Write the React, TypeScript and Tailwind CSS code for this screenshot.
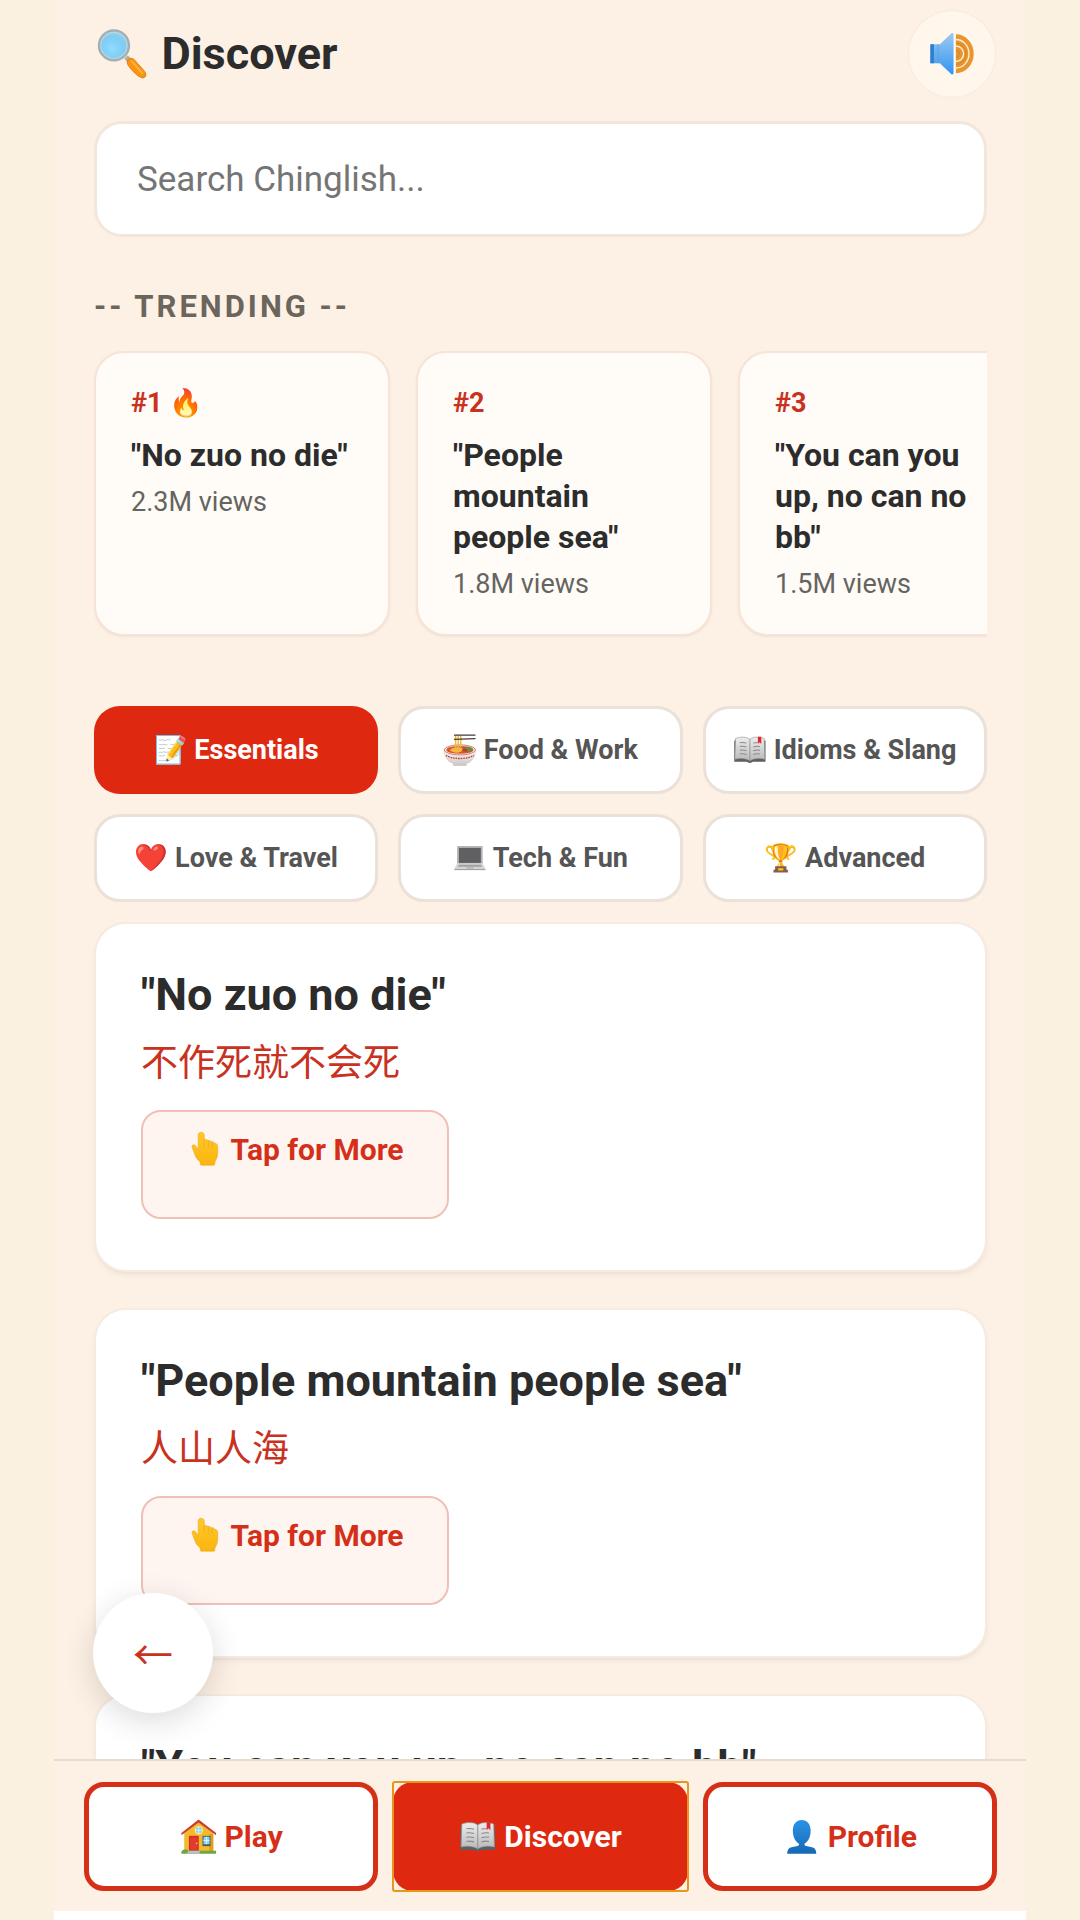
import type { ReactNode } from 'react';

function Icon({ children }: { children: ReactNode }) {
  return (
    <svg viewBox="0 0 40 40" aria-hidden="true" className="inline-block size-[1.25em] align-[-0.28em]">
      {children}
    </svg>
  );
}

function SearchIcon() {
  return (
    <Icon>
      <defs>
        <radialGradient id="lens" cx="0.45" cy="0.6" r="0.65">
          <stop offset="0" stopColor="#8fdcff" />
          <stop offset="0.6" stopColor="#7ecbf5" />
          <stop offset="1" stopColor="#a5d3ea" />
        </radialGradient>
      </defs>
      <path d="M21.5 24l2.5-2.5 3 3-2.5 2.5z" fill="#a9b3a6" />
      <path d="M24 25c1.5-2 3.5-1.5 5 0l7 8c1.8 2.5.5 5-2 4.5-3-.8-7-5-9.500-8.500-.9-1.300-1.100-3-.5-4z" fill="#fb9410" stroke="#d9780a" strokeWidth="0.6" />
      <path d="M27 26l7.500 8.500" stroke="#ffb545" strokeWidth="1.2" strokeLinecap="round" />
      <circle cx="14.2" cy="14.5" r="10.6" fill="url(#lens)" stroke="#a3afb2" strokeWidth="1.8" />
      <circle cx="14.2" cy="14.5" r="9.3" fill="none" stroke="#bcd6dd" strokeWidth="0.8" />
    </Icon>
  );
}

function SpeakerIcon() {
  return (
    <Icon>
      <defs>
        <linearGradient id="horn" x1="0" y1="0" x2="0" y2="1">
          <stop offset="0" stopColor="#9fcaf0" />
          <stop offset="1" stopColor="#2f95f2" />
        </linearGradient>
      </defs>
      <path d="M2 12h8L19.500 3c1-.8 2-.4 2 1v32c0 1.500-1 1.800-2 1L10 28H2z" fill="url(#horn)" />
      <path d="M2 12h3v16H2z" fill="#2b7fd0" />
      <path d="M8.500 12v16" stroke="#5d9fd8" strokeWidth="0.7" />
      <path d="M23.500 3.500a15 16.500 0 0 1 0 33z" fill="#e8952f" />
      <g fill="none" stroke="#fff1d8" strokeWidth="1.1">
        <path d="M23.500 8a11 12 0 0 1 0 24" />
        <path d="M23.500 13.500a6.500 6.500 0 0 1 0 13" />
      </g>
      <g fill="none" stroke="#c97d24" strokeWidth="0.6">
        <path d="M23.500 11a8.500 9 0 0 1 0 18" />
        <path d="M23.500 17a3 3 0 0 1 0 6" />
      </g>
    </Icon>
  );
}

function NoodlesIcon() {
  return (
    <Icon>
      <defs>
        <linearGradient id="bowl" x1="0" y1="0" x2="0" y2="1">
          <stop offset="0" stopColor="#ffffff" />
          <stop offset="1" stopColor="#c9c5c2" />
        </linearGradient>
      </defs>
      <path d="M1.500 20c0 9 5 14.500 11 16v2.500h15V36c6-1.500 11-7 11-16z" fill="url(#bowl)" stroke="#b9b0aa" strokeWidth="0.5" />
      <ellipse cx="20" cy="20" rx="18.5" ry="6" fill="#f4ece8" stroke="#c4503a" strokeWidth="0.8" />
      <ellipse cx="20" cy="20" rx="16" ry="4.7" fill="#d9552b" />
      <path d="M8 20.500c2-3 6-4 12-3.500 3 .5 4 2.500 2 4.500-3 2.500-10 2.500-14-1z" fill="#f3b643" />
      <path d="M26 17.500c2.500-2 6-1.500 8 .5l1 2.500-5 1z" fill="#55963e" />
      <path d="M23 20c1.500-2 4-2 5.500 0s-4 3-5.500 0z" fill="#a8452e" />
      <path d="M3.500 26.500c8 5 25 5 33 0" fill="none" stroke="#c8402f" strokeWidth="1.6" strokeDasharray="2 1" />
      <path d="M15 3v15M18 2v16M21 3v14" stroke="#f2b632" strokeWidth="1.7" fill="none" />
      <path d="M13 2.500h25.500M13 7.500l25.500-.8" stroke="#4a3a35" strokeWidth="1.6" />
    </Icon>
  );
}

function BookIcon() {
  return (
    <Icon>
      <defs>
        <linearGradient id="page" x1="0" y1="0" x2="0" y2="1">
          <stop offset="0" stopColor="#ededed" />
          <stop offset="1" stopColor="#b9b9b9" />
        </linearGradient>
      </defs>
      <path d="M1.500 9v25h14.500c1.500 0 2 1.500 4 1.500s2.500-1.500 4-1.500h14.500V9z" fill="#5f5f63" />
      <path d="M3 6.500c7-2.500 13-2 17 1 4-3 10-3.500 17-1l.8 24.500c-7-1.500-13-1-17.800 2-4.800-3-10.800-3.500-17.800-2z" fill="url(#page)" stroke="#8d8d90" strokeWidth="0.7" />
      <path d="M20 7.500V33" stroke="#8e8e92" strokeWidth="1" />
      <g stroke="#8a8a8e" strokeWidth="1.2" fill="none">
        <path d="M8 11.500c3-.6 5-.4 8 .5M8 16c3-.6 5-.4 8 .5M8 20.500c3-.6 5-.4 8 .5M8 25c3-.6 5-.4 8 .5" />
        <path d="M24 12c2-.6 3-.8 5-.8M24 16.500c3-.9 5-1.100 8-.5M24 21c3-.9 5-1.100 8-.5M24 25.500c3-.9 5-1.100 8-.5" />
      </g>
      <path d="M29.500 4.500h4v8.500l-2-2-2 2z" fill="#e0262b" />
    </Icon>
  );
}

function LaptopIcon() {
  return (
    <Icon>
      <path d="M6 6h28c.8 0 1.200.5 1.200 1.200V27H4.800V7.200C4.800 6.500 5.200 6 6 6z" fill="#b5b5b7" />
      <path d="M7 8.200h26V26H7z" fill="#606062" />
      <path d="M4.800 27h30.400l3.300 6.500H1.500z" fill="#d4d4d6" />
      <path d="M7 28.200h26l1.300 2.300H5.700z" fill="#a0a0a3" />
      <path d="M1.500 33.300h37v1.200h-37z" fill="#9a9a9c" />
      <path d="M16 31.200h8l.6 1.700h-9.200z" fill="#b5b5b8" />
    </Icon>
  );
}

function HandIcon() {
  return (
    <Icon>
      <defs>
        <linearGradient id="skin" x1="0" y1="0" x2="0" y2="1">
          <stop offset="0" stopColor="#ffc928" />
          <stop offset="1" stopColor="#fbb40f" />
        </linearGradient>
      </defs>
      <path
        d="M16 2.500c-1.800 0-3 1.200-3 3V20.500l-2.800-3.700c-2-2-4.500-.6-3.600 1.900l3.200 8.500c.8 2.800 2.700 4.500 5 6.300l1 4h14.500l.8-4c1.800-3 2.700-5.500 2.700-9.500v-6.500c0-2-1.300-3.200-3.100-3.300-.6-1.300-1.800-2-3.600-1.700-.8-1.100-2-1.500-3.600-1.200-.8-.9-2.200-1.300-4-1V5.500c0-1.800-1.400-3-3.500-3z"
        fill="url(#skin)"
        stroke="#eaa51a"
        strokeWidth="0.6"
      />
      <path d="M19.500 10.500v6.500M23.800 11.800v6M27.600 13.300v5" stroke="#eba51f" strokeWidth="0.8" strokeLinecap="round" fill="none" />
    </Icon>
  );
}

function HouseIcon() {
  return (
    <Icon>
      <path d="M4.500 15.500L20 4l15.500 11.500V36h-31z" fill="#f7b92c" />
      <path d="M31 17h4.500v19H31z" fill="#e39d1c" />
      <path d="M19.800 1.500L38.500 16v2.500L19.800 4.800 1.500 18.500V16z" fill="#c93d2c" />
      <circle cx="20" cy="13" r="4" fill="#7fd0f2" stroke="#fff0b0" strokeWidth="1" />
      <path d="M20 9v8M16 13h8" stroke="#fff6d8" strokeWidth="0.9" />
      <path d="M9.500 19h10.500v17H9.500z" fill="#d42f24" />
      <path d="M11 21h7.500v13H11z" fill="#e23c30" />
      <circle cx="17.8" cy="27" r="0.9" fill="#f8c33c" />
      <path d="M24 19h8.500v11H24z" fill="#465a66" />
      <path d="M25 20h6.500v8H25z" fill="#83d5f5" />
      <path d="M28.200 20v8M25 24h6.500" stroke="#fff" strokeWidth="0.8" />
      <path d="M1.500 36c1-2.500 4-3.500 7-2v1h30V38h-37z" fill="#6da643" />
      <path d="M9 35h12v3H7z" fill="#b7c3c9" />
    </Icon>
  );
}

function PersonIcon() {
  return (
    <Icon>
      <defs>
        <linearGradient id="bust" x1="0" y1="0" x2="0" y2="1">
          <stop offset="0" stopColor="#2b93e6" />
          <stop offset="1" stopColor="#1768b5" />
        </linearGradient>
      </defs>
      <path
        d="M20 2c-6 0-9.500 4.500-9.500 11.500 0 6.500 2.700 11.500 6.300 13.800.7 1.200.2 2.200-1.300 2.600l-6.500 1.300C5.800 32 4.500 34.500 4.500 38h31c0-3.500-1.300-6-4.500-6.800l-6.500-1.300c-1.500-.4-2-1.400-1.300-2.600 3.600-2.300 6.300-7.300 6.300-13.800C29.500 6.500 26 2 20 2z"
        fill="url(#bust)"
      />
    </Icon>
  );
}

const trending = [
  { rank: '#1 🔥', title: '"No zuo no die"', views: '2.3M views' },
  { rank: '#2', title: '"People mountain people sea"', views: '1.8M views' },
  { rank: '#3', title: '"You can you up, no can no bb"', views: '1.5M views' },
];

const categories = [
  { icon: '📝', label: 'Essentials', active: true },
  { icon: <NoodlesIcon />, label: 'Food & Work', active: false },
  { icon: <BookIcon />, label: 'Idioms & Slang', active: false },
  { icon: '❤️', label: 'Love & Travel', active: false },
  { icon: <LaptopIcon />, label: 'Tech & Fun', active: false },
  { icon: '🏆', label: 'Advanced', active: false },
];

const phrases = [
  { title: '"No zuo no die"', chinese: '不作死就不会死' },
  { title: '"People mountain people sea"', chinese: '人山人海' },
  { title: '"You can you up, no can no bb"', chinese: '你行你上啊' },
];

const tabs = [
  { icon: <HouseIcon />, label: 'Play', active: false },
  { icon: <BookIcon />, label: 'Discover', active: true },
  { icon: <PersonIcon />, label: 'Profile', active: false },
];

export default function App() {
  return (
    <div className="h-screen overflow-hidden bg-[#fbf1e1] font-['Roboto','Noto_Sans_CJK_SC',sans-serif] text-[#2c2c2c]">
      <div className="relative mx-auto flex h-full w-9/10 flex-col bg-[#fdf0e4]">
        <main className="min-h-0 flex-1 overflow-y-auto pt-6 pr-[39px] pl-10 [scrollbar-width:none]">
          <h1 className="text-[45px] leading-[60px] font-bold">
            <SearchIcon /> Discover
          </h1>

          <input
            type="search"
            aria-label="Search Chinglish"
            placeholder="Search Chinglish..."
            className="mt-[37px] h-[116px] w-full rounded-[28px] border-[3px] border-[#f3e7dc] bg-white px-10 text-[35px] placeholder:text-[#757575]"
          />

          <h2 className="mt-[48px] text-[31px] leading-[44px] font-bold tracking-[3px] text-[#6b665c]">-- TRENDING --</h2>
          <div className="mt-[22px] flex gap-[26px] overflow-x-auto pb-3 [scrollbar-width:none]">
            {trending.map((item) => (
              <article
                key={item.title}
                className="w-[296px] shrink-0 rounded-[30px] border-2 border-[#f8e3d8] bg-[#fffcf7] px-[35px] pt-[32px] pb-[32px] shadow-sm shadow-black/5"
              >
                <div className="text-[27px] leading-[36px] font-bold text-[#c8321f]">{item.rank}</div>
                <h3 className="mt-[14px] text-[32px] leading-[41px] font-bold">{item.title}</h3>
                <div className="mt-2 text-[27px] leading-[36px] text-[#666460]">{item.views}</div>
              </article>
            ))}
          </div>

          {/* Category filter */}
          <div className="mt-[58px] grid grid-cols-3 gap-5">
            {categories.map((cat) => (
              <button
                key={cat.label}
                className={
                  cat.active
                    ? 'h-[88px] rounded-[26px] bg-[#de2910] text-[27px] font-bold whitespace-nowrap text-white'
                    : 'h-[88px] rounded-[26px] border-[3px] border-[#ebe1d8] bg-white text-[27px] font-bold whitespace-nowrap text-[#555]'
                }
              >
                {cat.icon} {cat.label}
              </button>
            ))}
          </div>

          {/* Phrase cards */}
          <div className="mt-5 flex flex-col gap-[36px] pb-10">
            {phrases.map((phrase) => (
              <article key={phrase.title} className="rounded-[32px] border-2 border-[#f5ebe0] bg-white px-[45px] pt-[41px] pb-[51px] shadow-md shadow-black/5">
                <h3 className="text-[45px] leading-[60px] font-bold">{phrase.title}</h3>
                <p className="mt-[14px] text-[37px] leading-[50px] text-[#c8321f]">{phrase.chinese}</p>
                <button className="mt-[21px] h-[109px] w-[308px] rounded-[20px] border-2 border-[#f0c0b8] bg-[#fff5f0] pb-[30px] text-[30px] leading-[40px] font-bold text-[#d42f18]">
                  <HandIcon /> Tap for More
                </button>
              </article>
            ))}
          </div>
        </main>

        <nav className="grid grid-cols-3 gap-[15px] border-t-2 border-[#e6dbd0] pt-[21px] pr-[29px] pb-5 pl-[30px]">
          {tabs.map((tab) =>
            tab.active ? (
              <div key={tab.label} className="rounded-xs outline-2 -outline-offset-1 outline-[#e8951a]">
                <button className="h-[109px] w-full rounded-[20px] bg-[#de2910] text-[30px] font-bold text-white">
                  {tab.icon} {tab.label}
                </button>
              </div>
            ) : (
              <button key={tab.label} className="h-[109px] rounded-[20px] border-[5px] border-[#d62f18] bg-white text-[30px] font-bold text-[#d62f18]">
                {tab.icon} {tab.label}
              </button>
            )
          )}
        </nav>
        <div className="h-[9px] bg-white" />

        {/* Floating controls */}
        <button
          aria-label="Sound"
          className="absolute top-[11px] right-[31px] flex size-[86px] items-center justify-center rounded-full bg-[#fff6ec] text-[38px] shadow-[0_0_2px_rgba(120,80,40,0.1)]"
        >
          <SpeakerIcon />
        </button>
        <button
          aria-label="Back"
          className="absolute bottom-[207px] left-[39px] size-[120px] rounded-full bg-white pt-2 text-[40px] text-[#c8321f] shadow-[0_8px_32px_rgba(0,0,0,0.14)]"
        >
          ←
        </button>
      </div>
    </div>
  );
}
